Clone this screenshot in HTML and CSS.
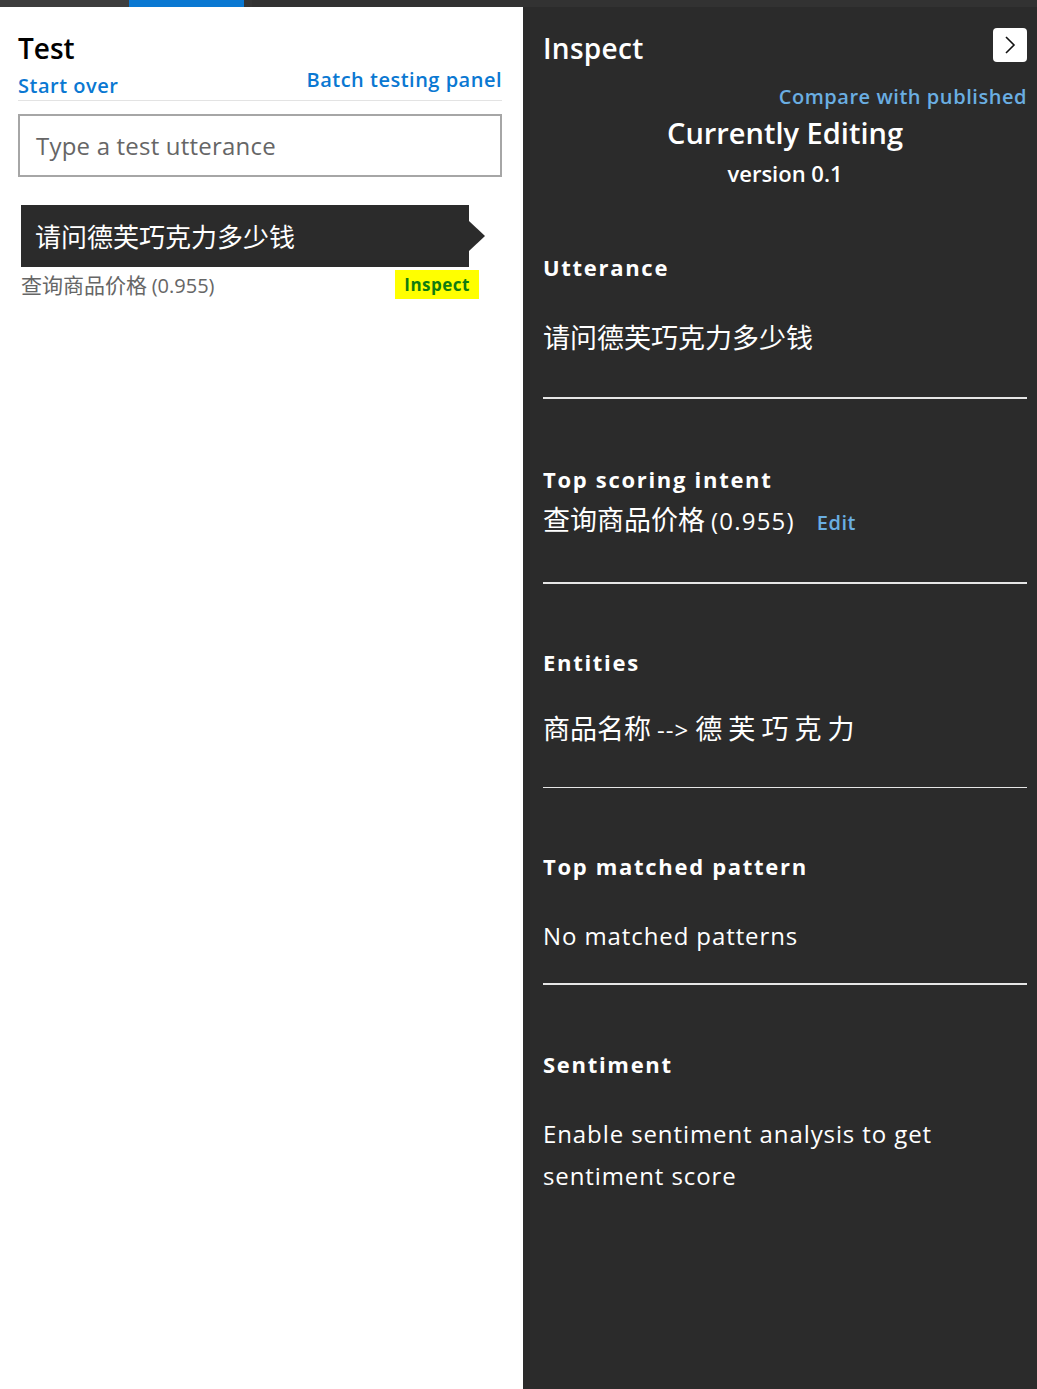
FILE: index.html
```html
<!DOCTYPE html>
<html lang="en">
<head>
<meta charset="utf-8">
<title>Test</title>
<link rel="stylesheet" href="styles.css">
</head>
<body>
<div class="tabstrip">
  <span class="tab tab-a"></span>
  <span class="tab tab-active"></span>
  <span class="tab tab-b"></span>
  <span class="tab tab-rest"></span>
</div>
<div class="layout">
  <section class="test-panel">
    <h1 class="title">Test</h1>
    <div class="links-row">
      <a class="link start-over">Start over</a>
      <a class="link batch">Batch testing panel</a>
    </div>
    <div class="input-box">Type a test utterance</div>
    <div class="chip">请问德芙巧克力多少钱</div>
    <div class="result-row">
      <span class="result-intent">查询商品价格 <span class="result-score">(0.955)</span></span>
      <span class="inspect-badge">Inspect</span>
    </div>
  </section>
  <section class="inspect-panel">
    <div class="inspect-header">
      <h2 class="inspect-title">Inspect</h2>
      <button class="collapse-btn" aria-label="Collapse">
        <svg width="14" height="20" viewBox="0 0 14 20"><path d="M3 2 L11 10 L3 18" fill="none" stroke="#111" stroke-width="1.6"/></svg>
      </button>
    </div>
    <div class="compare-row"><a class="compare-link">Compare with published</a></div>
    <div class="editing">Currently Editing</div>
    <div class="version">version 0.1</div>

    <div class="sec sec-utt">
      <div class="sec-title">Utterance</div>
      <div class="sec-body">请问德芙巧克力多少钱</div>
    </div>
    <div class="sec sec-intent">
      <div class="sec-title">Top scoring intent</div>
      <div class="sec-body"><span class="cjk">查询商品价格</span> <span class="score">(0.955)</span><a class="edit-link">Edit</a></div>
    </div>
    <div class="sec sec-ent">
      <div class="sec-title">Entities</div>
      <div class="sec-body">商品名称 <span class="arrow">--&gt;</span> 德 芙 巧 克 力</div>
    </div>
    <div class="sec sec-pat">
      <div class="sec-title">Top matched pattern</div>
      <div class="sec-body plain">No matched patterns</div>
    </div>
    <div class="sec sec-sent">
      <div class="sec-title">Sentiment</div>
      <div class="sec-body plain">Enable sentiment analysis to get sentiment score</div>
    </div>
  </section>
</div>
</body>
</html>
```

FILE: styles.css
```css
* { box-sizing: border-box; }
html, body { margin: 0; padding: 0; }
body {
  font-family: "Open Sans", "Noto Sans CJK SC", sans-serif;
  background: #2b2b2b;
  width: 1037px;
  height: 1389px;
  overflow: hidden;
}
.tabstrip { display: flex; height: 7px; }
.tab { display: block; height: 7px; }
.tab-a { width: 129px; background: #3d3d3d; }
.tab-active { width: 115px; background: #0a78d2; }
.tab-b { width: 8px; background: #353535; }
.tab-rest { flex: 1; background: #323232; }

.layout { display: flex; height: 1382px; }

.test-panel {
  width: 523px;
  background: #fff;
  padding: 0 21px 0 18px;
}
.title {
  margin: 23px 0 0;
  font-size: 28px;
  line-height: 36px;
  font-weight: 600;
  color: #000;
}
.links-row {
  display: flex;
  justify-content: space-between;
  align-items: flex-end;
  height: 35px;
  border-bottom: 1px solid #e3e3e3;
}
.link {
  color: #0a78d2;
  font-size: 20px;
  line-height: 26px;
  font-weight: 600;
  letter-spacing: 0.5px;
}
.start-over { margin-bottom: 1px; }
.batch { margin-bottom: 7px; }
.input-box {
  margin-top: 13px;
  height: 63px;
  border: 2px solid #a6a6a6;
  padding-left: 16px;
  display: flex;
  align-items: center;
  font-size: 24px;
  letter-spacing: 0.2px;
  color: #666;
}
.chip {
  position: relative;
  margin: 28px 0 0 3px;
  width: 448px;
  height: 62px;
  background: #2b2b2b;
  color: #fff;
  font-family: "Noto Sans CJK SC", sans-serif;
  font-size: 26px;
  line-height: 62px;
  padding-left: 14px;
}
.chip::after {
  content: "";
  position: absolute;
  left: 100%;
  top: 16px;
  border-left: 16px solid #2b2b2b;
  border-top: 15px solid transparent;
  border-bottom: 15px solid transparent;
}
.result-row {
  display: flex;
  justify-content: space-between;
  align-items: flex-start;
  width: 458px;
  margin: 3px 0 0 3px;
}
.result-intent {
  font-family: "Noto Sans CJK SC", sans-serif;
  font-size: 21px;
  line-height: 28px;
  color: #666;
}
.result-score { font-family: "Open Sans", sans-serif; font-size: 20px; }
.inspect-badge {
  background: #ffff00;
  color: #107c10;
  font-size: 17px;
  font-weight: 700;
  line-height: 29px;
  padding: 0 9px;
  letter-spacing: 0.5px;
}

.inspect-panel {
  flex: 1;
  background: #2b2b2b;
  color: #fff;
  padding: 0 10px 0 20px;
}
.inspect-header {
  display: flex;
  justify-content: space-between;
  align-items: center;
  margin-top: 21px;
  height: 34px;
}
.inspect-title {
  margin: 6px 0 0;
  font-size: 28px;
  line-height: 36px;
  font-weight: 600;
  letter-spacing: 0.3px;
}
.collapse-btn {
  width: 34px;
  height: 34px;
  background: #fff;
  border: none;
  border-radius: 4px;
  padding: 0;
  display: flex;
  align-items: center;
  justify-content: center;
}
.compare-row {
  display: flex;
  justify-content: flex-end;
  margin-top: 22px;
}
.compare-link {
  color: #6aaee2;
  font-size: 20px;
  line-height: 26px;
  font-weight: 600;
  letter-spacing: 0.55px;
}
.editing {
  text-align: center;
  font-size: 29px;
  line-height: 36px;
  font-weight: 600;
  margin-top: 5px;
}
.version {
  text-align: center;
  font-size: 22px;
  line-height: 28px;
  font-weight: 600;
  margin-top: 8px;
}

.sec { border-bottom: 2px solid #e6e6e6; }
.sec-title {
  font-size: 22px;
  line-height: 28px;
  font-weight: 700;
  letter-spacing: 1.7px;
}
.sec-body {
  font-family: "Noto Sans CJK SC", sans-serif;
  font-size: 27px;
  line-height: 36px;
}
.sec-body.plain {
  font-family: "Open Sans", sans-serif;
  font-size: 24px;
  font-weight: 400;
  letter-spacing: 0.9px;
}
.sec-utt { margin-top: 66px; padding-bottom: 42px; }
.sec-utt .sec-body { margin-top: 38px; }
.sec-intent { margin-top: 66px; padding-bottom: 41px; }
.sec-intent .sec-body { margin-top: 8px; }
.score { font-family: "Open Sans", sans-serif; font-size: 24px; letter-spacing: 1.2px; }
.edit-link {
  font-family: "Open Sans", sans-serif;
  color: #6aaee2;
  font-size: 20px;
  font-weight: 600;
  letter-spacing: 0.5px;
  margin-left: 22px;
}
.sec-ent { margin-top: 64px; padding-bottom: 39px; border-bottom-width: 1px; }
.sec-ent .sec-body { margin-top: 34px; }
.arrow { font-family: "Open Sans", sans-serif; font-size: 24px; letter-spacing: 1px; }
.sec-pat { margin-top: 64px; padding-bottom: 29px; }
.sec-pat .sec-body { margin-top: 38px; }
.sec-sent { margin-top: 65px; border-bottom: none; }
.sec-sent .sec-body { margin-top: 35px; line-height: 42px; }
```
